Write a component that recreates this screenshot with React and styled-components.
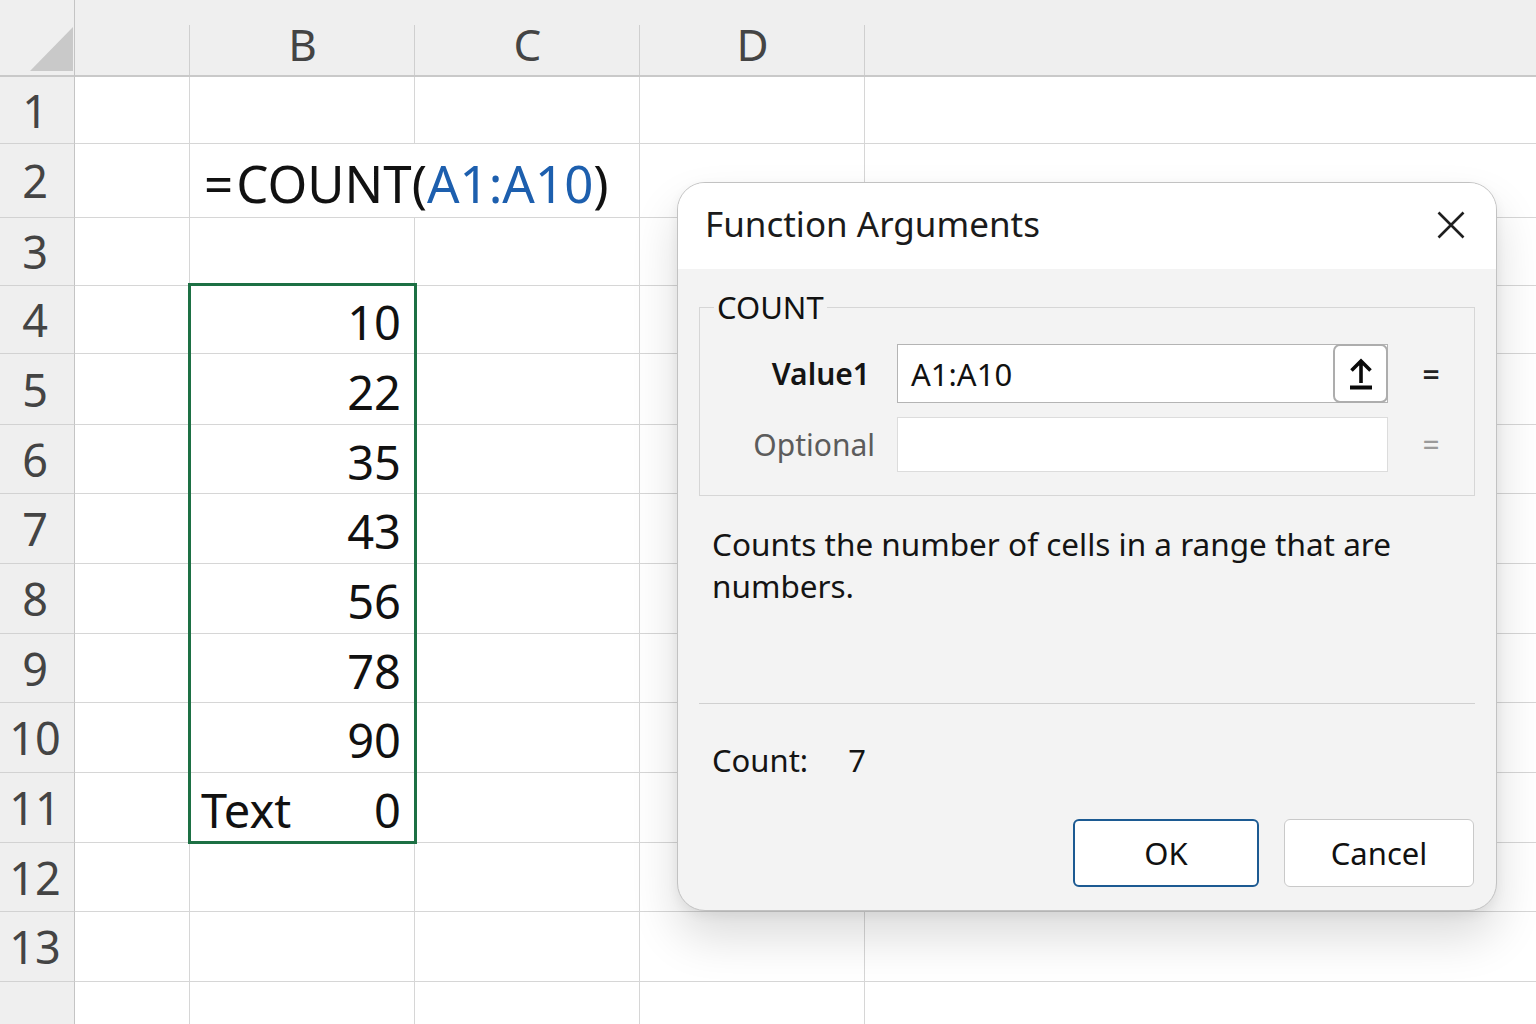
import React from 'react'
import styled, { createGlobalStyle } from 'styled-components'

const GlobalStyle = createGlobalStyle`
  html, body {
    margin: 0;
    padding: 0;
    background: #ffffff;
    overflow: hidden;
  }
  body {
    font-family: "Noto Sans", "Open Sans", sans-serif;
    color: #111;
  }
`

// column widths (row header, A, B, C, D) and row heights, the rest stretches
const COLS = [75, 115, 225, 225, 225]
const COL_LABELS = ['', 'B', 'C', 'D', '']
const HEADER_H = 77
const ROWS = [67, 74, 68, 68, 71, 69, 70, 70, 69, 70, 70, 69, 70]

const CELLS = {
  'B4': { right: '10' },
  'B5': { right: '22' },
  'B6': { right: '35' },
  'B7': { right: '43' },
  'B8': { right: '56' },
  'B9': { right: '78' },
  'B10': { right: '90' },
  'B11': { left: 'Text', right: '0' },
}

const Sheet = styled.div`
  position: relative;
  display: grid;
  grid-template-columns: ${COLS.map((c) => c + 'px').join(' ')} 1fr;
  grid-template-rows: ${HEADER_H}px ${ROWS.map((r) => r + 'px').join(' ')} 1fr;
  width: 100vw;
  height: 100vh;
`

const Corner = styled.div`
  background: #efefef;
  border-right: 1px solid #c4c4c4;
  border-bottom: 2px solid #c9c9c9;
  display: flex;
  align-items: flex-end;
  justify-content: flex-end;
  padding: 0 1px 4px 0;

  svg {
    display: block;
  }
`

const ColHead = styled.div`
  position: relative;
  background: #efefef;
  border-bottom: 2px solid #c9c9c9;
  display: flex;
  align-items: center;
  justify-content: center;
  padding-top: 12px;
  font-size: 44px;
  color: #444;

  &::after {
    content: '';
    position: absolute;
    right: 0;
    top: 25px;
    bottom: 0;
    width: 1px;
    background: ${(p) => (p.$last ? 'transparent' : '#cfcfcf')};
  }
`

const RowHead = styled.div`
  background: #efefef;
  border-right: 1px solid #c4c4c4;
  border-bottom: ${(p) => (p.$last ? 'none' : '1px solid #d2d2d2')};
  display: flex;
  align-items: center;
  justify-content: center;
  padding-right: 4px;
  font-size: 45px;
  color: #444;
`

const Cell = styled.div`
  border-right: ${(p) => (p.$open ? 'none' : '1px solid #d6d6d6')};
  border-bottom: ${(p) => (p.$last ? 'none' : '1px solid #d6d6d6')};
  display: flex;
  align-items: center;
  justify-content: space-between;
  padding: 5px 13px 0 11px;
  font-size: 47px;
  color: #111;
  white-space: nowrap;
  min-width: 0;
`

const Formula = styled.span`
  padding-left: 3px;
  font-size: 51px;
  color: #111;
`

const Eq = styled.span`
  margin-right: 3px;
`

const RangeRef = styled.span`
  color: #1d5fae;
`

const Filler = styled.span`
  flex: 1;
`

const Selection = styled.div`
  position: absolute;
  box-sizing: border-box;
  border: 3px solid #1d7044;
  pointer-events: none;
`

const Dialog = styled.div`
  position: absolute;
  left: 677px;
  top: 182px;
  width: 820px;
  box-sizing: border-box;
  border: 1px solid #c2c2c2;
  border-radius: 28px;
  overflow: hidden;
  background: #f3f3f3;
  box-shadow: 0 26px 48px rgba(0, 0, 0, 0.14), 0 4px 12px rgba(0, 0, 0, 0.06);
`

const DialogHeader = styled.div`
  height: 86px;
  background: #ffffff;
  display: flex;
  align-items: center;
  justify-content: space-between;
  padding: 0 31px 0 27px;
`

const Title = styled.div`
  font-size: 35px;
  color: #1b1b1b;
  padding-bottom: 6px;
`

const CloseButton = styled.div`
  width: 28px;
  height: 28px;
  color: #1f1f1f;
  margin-top: -3px;

  svg {
    display: block;
  }
`

const DialogBody = styled.div`
  padding: 0 21px 23px;
  display: flex;
  flex-direction: column;
`

const ArgGroup = styled.fieldset`
  margin: 23px 0 0;
  padding: 21px 0 23px;
  border: 1px solid #d6d6d6;
  min-width: 0;
`

const GroupLegend = styled.legend`
  margin-left: 14px;
  padding: 0 3px;
  font-size: 31px;
  line-height: 1;
  color: #111;
`

const ArgGrid = styled.div`
  display: grid;
  grid-template-columns: 197px 491px 1fr;
  row-gap: 14px;
  align-items: center;
`

const ArgLabel = styled.div`
  text-align: right;
  margin-right: ${(p) => (p.$muted ? 22 : 27)}px;
  font-size: 30px;
  font-weight: ${(p) => (p.$muted ? 400 : 600)};
  color: ${(p) => (p.$muted ? '#5c5c5c' : '#141414')};
`

const ArgInput = styled.div`
  box-sizing: border-box;
  height: ${(p) => p.$h}px;
  background: #ffffff;
  border: 1px solid ${(p) => (p.$active ? '#b4b4b4' : '#dcdcdc')};
  display: flex;
  align-items: center;
  padding-left: 13px;
  font-size: 31px;
  color: #111;
`

const CollapseButton = styled.div`
  box-sizing: border-box;
  margin: -1px -1px -1px auto;
  width: 55px;
  height: 59px;
  border: 2px solid #adadad;
  border-radius: 7px;
  background: #ffffff;
  display: flex;
  align-items: center;
  justify-content: center;
  color: #0a0a0a;

  svg {
    display: block;
  }
`

const EqualSign = styled.div`
  text-align: center;
  font-size: 30px;
  font-weight: ${(p) => (p.$muted ? 400 : 600)};
  color: ${(p) => (p.$muted ? '#9a9a9a' : '#222')};
`

const Description = styled.p`
  margin: 27px 0 0 13px;
  height: 180px;
  font-size: 31.5px;
  line-height: 42px;
  color: #141414;
`

const Divider = styled.div`
  height: 1px;
  background: #d0d0d0;
`

const ResultLine = styled.div`
  margin: 36px 0 0 13px;
  font-size: 31px;
  line-height: 40px;
  color: #141414;
`

const ResultValue = styled.span`
  margin-left: 40px;
`

const ButtonRow = styled.div`
  margin-top: 39px;
  display: flex;
  justify-content: flex-end;
  gap: 25px;
  padding-right: 1px;
`

const DialogButton = styled.div`
  box-sizing: border-box;
  width: ${(p) => (p.$primary ? 186 : 190)}px;
  height: 68px;
  border-radius: 6px;
  background: #ffffff;
  border: ${(p) => (p.$primary ? '2px solid #1c5a92' : '1px solid #c9c9c9')};
  display: flex;
  align-items: center;
  justify-content: center;
  font-size: 31px;
  color: #111;
`

const renderCell = (colIdx, rowNum, isLastRow) => {
  const letter = ['A', 'B', 'C', 'D', 'E'][colIdx]
  const key = letter + rowNum
  if (key === 'B2') {
    return (
      <Cell key={key} $open>
        <Formula>
          <Eq>=</Eq>COUNT(<RangeRef>A1:A10</RangeRef>)
        </Formula>
      </Cell>
    )
  }
  const data = CELLS[key]
  return (
    <Cell key={key} $open={colIdx === 4} $last={isLastRow}>
      {data && (
        <>
          {data.left ? <span>{data.left}</span> : <Filler />}
          <span>{data.right}</span>
        </>
      )}
    </Cell>
  )
}

export default function App() {
  const rowTops = ROWS.reduce((acc, h, i) => [...acc, acc[i] + h], [HEADER_H])
  const colLefts = COLS.reduce((acc, w, i) => [...acc, acc[i] + w], [0])
  const sel = {
    left: colLefts[2] - 2,
    top: rowTops[3] - 3,
    width: COLS[2] + 4,
    height: rowTops[11] - rowTops[3] + 4,
  }

  return (
    <>
      <GlobalStyle />
      <Sheet>
        <Corner>
          <svg width="43" height="44" viewBox="0 0 43 44">
            <polygon points="0,44 43,44 43,0" fill="#c9c9c9" />
          </svg>
        </Corner>
        {COL_LABELS.map((label, i) => (
          <ColHead key={'h' + i} $last={i === COL_LABELS.length - 1}>
            {label}
          </ColHead>
        ))}
        {[...ROWS, 0].map((_, r) => {
          const rowNum = r + 1
          const isLast = r === ROWS.length
          return (
            <React.Fragment key={'r' + rowNum}>
              <RowHead $last={isLast}>{isLast ? '' : rowNum}</RowHead>
              {[0, 1, 2, 3, 4].map((c) => renderCell(c, rowNum, isLast))}
            </React.Fragment>
          )
        })}
        <Selection style={sel} />
      </Sheet>

      <Dialog>
        <DialogHeader>
          <Title>Function Arguments</Title>
          <CloseButton>
            <svg width="28" height="28" viewBox="0 0 28 28">
              <path d="M1.5 1.5 L26.5 26.5 M26.5 1.5 L1.5 26.5" stroke="currentColor" strokeWidth="2.6" />
            </svg>
          </CloseButton>
        </DialogHeader>
        <DialogBody>
          <ArgGroup>
            <GroupLegend>COUNT</GroupLegend>
            <ArgGrid>
              <ArgLabel>Value1</ArgLabel>
              <ArgInput $h={59} $active>
                A1:A10
                <CollapseButton>
                  <svg width="24" height="32" viewBox="0 0 24 32">
                    <path d="M12 4 V25 M2.5 12.5 L12 3 L21.5 12.5" stroke="currentColor" strokeWidth="3.6" fill="none" />
                    <rect x="1" y="27.5" width="22" height="4" fill="currentColor" />
                  </svg>
                </CollapseButton>
              </ArgInput>
              <EqualSign>=</EqualSign>
              <ArgLabel $muted>Optional</ArgLabel>
              <ArgInput $h={55} />
              <EqualSign $muted>=</EqualSign>
            </ArgGrid>
          </ArgGroup>
          <Description>Counts the number of cells in a range that are numbers.</Description>
          <Divider />
          <ResultLine>
            Count:<ResultValue>7</ResultValue>
          </ResultLine>
          <ButtonRow>
            <DialogButton $primary>OK</DialogButton>
            <DialogButton>Cancel</DialogButton>
          </ButtonRow>
        </DialogBody>
      </Dialog>
    </>
  )
}
